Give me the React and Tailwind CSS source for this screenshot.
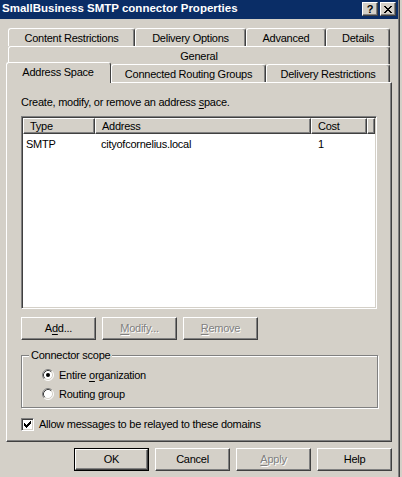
import React from "react";

const RAISED =
  "border border-t-white border-l-white border-r-[#404040] border-b-[#404040] shadow-[inset_-1px_-1px_0_#808080]";
const DIS = "text-[#808080] [text-shadow:1px_1px_0_#ffffff]";

function Px({ rows, color = "#000", w, h }) {
  const rects = [];
  rows.forEach((r, y) => {
    for (let x = 0; x < r.length; x++) if (r[x] === "#") rects.push(<rect key={x + "-" + y} x={x} y={y} width="1" height="1" fill={color} />);
  });
  return (
    <svg width={w} height={h} viewBox={`0 0 ${w} ${h}`} shapeRendering="crispEdges">
      {rects}
    </svg>
  );
}

function CapBtn({ children }) {
  return (
    <div className={`w-[16px] h-[14px] bg-[#d4d0c8] flex items-center justify-center ${RAISED}`}>{children}</div>
  );
}

function Tab({ className, children }) {
  return (
    <div
      className={`shrink-0 flex items-center justify-center pt-[1px] bg-[#d4d0c8] border-t border-l border-r border-t-white border-l-white border-r-[#404040] rounded-t-[3px] shadow-[inset_-1px_0_0_#808080] whitespace-nowrap ${className}`}
    >
      {children}
    </div>
  );
}

function Btn({ children, disabled, def }) {
  const inner = (
    <div className={`w-full h-full flex items-center justify-center bg-[#d4d0c8] ${RAISED} ${disabled ? DIS : ""}`}>
      {children}
    </div>
  );
  if (def) return <div className="w-[75px] h-[23px] border border-black">{inner}</div>;
  return <div className="w-[75px] h-[23px]">{inner}</div>;
}

function Radio({ checked }) {
  return (
    <svg width="12" height="12" viewBox="0 0 12 12" className="shrink-0">
      <circle cx="6" cy="6" r="5" fill="#ffffff" />
      <path d="M2.11 9.89 A5.5 5.5 0 0 1 9.89 2.11" stroke="#808080" strokeWidth="1" fill="none" />
      <path d="M9.89 2.11 A5.5 5.5 0 0 1 2.11 9.89" stroke="#ffffff" strokeWidth="1" fill="none" />
      <path d="M2.82 9.18 A4.5 4.5 0 0 1 9.18 2.82" stroke="#404040" strokeWidth="1" fill="none" />
      <path d="M9.18 2.82 A4.5 4.5 0 0 1 2.82 9.18" stroke="#d4d0c8" strokeWidth="1" fill="none" />
      {checked && <circle cx="6" cy="6" r="2" fill="#000" />}
    </svg>
  );
}

function HeadCell({ className, children }) {
  return (
    <div className={`h-full shrink-0 flex items-center pl-[6px] bg-[#d4d0c8] ${RAISED} ${className}`}>{children}</div>
  );
}

export default function App() {
  return (
    <div className="w-[402px] h-[477px] bg-[#d4d0c8] overflow-hidden flex font-['Liberation_Sans',Arial,sans-serif] text-[11px] leading-[13px] text-black tracking-[-0.25px]">
      <div className="w-[398px] shrink-0 flex flex-col">
        {/* Title bar */}
        <div className="h-[19px] shrink-0 bg-[#0a2d66] flex items-start justify-between pl-[2px] pr-[2px]">
          <div className="pt-[2px] text-white font-bold text-[11.5px] tracking-normal whitespace-nowrap">
            SmallBusiness SMTP connector Properties
          </div>
          <div className="flex gap-[2px] pt-[2px]">
            <CapBtn>
              <span className="font-bold text-[11px] leading-[11px] tracking-normal">?</span>
            </CapBtn>
            <CapBtn>
              <Px
                w={8}
                h={7}
                rows={["##....##", ".##..##.", "..####..", "...##...", "..####..", ".##..##.", "##....##"]}
              />
            </CapBtn>
          </div>
        </div>

        {/* Tabs */}
        <div className="mt-[9px] ml-[8px] w-[382px] flex flex-col">
          <div className="flex h-[18px]">
            <Tab className="w-[127px]">Content Restrictions</Tab>
            <Tab className="w-[111px]">Delivery Options</Tab>
            <Tab className="w-[80px]">Advanced</Tab>
            <Tab className="w-[64px]">Details</Tab>
          </div>
          <div className="flex h-[18px]">
            <Tab className="w-[382px]">General</Tab>
          </div>
          <div className="flex h-[18px]">
            <Tab className="w-[105px] h-[21px] -mt-[2px] -ml-[2px] relative z-10 shadow-none border-r-[#404040]">
              <span className="-mt-[3px] pr-[1px]">Address Space</span>
            </Tab>
            <Tab className="w-[155px] h-[18px]">Connected Routing Groups</Tab>
            <Tab className="w-[124px] h-[18px]">Delivery Restrictions</Tab>
          </div>
        </div>

        {/* Panel */}
        <div className={`ml-[6px] w-[386px] h-[360px] shrink-0 flex flex-col pl-[14px] ${RAISED}`}>
          <div className="mt-[13px] h-[13px] whitespace-nowrap">
            Create, modify, or remove an address <span className="underline underline-offset-[2px]">s</span>pace.
          </div>

          {/* List view */}
          <div className="mt-[7px] w-[356px] h-[193px] shrink-0 bg-white border border-t-[#808080] border-l-[#808080] border-r-white border-b-white shadow-[inset_1px_1px_0_#404040,inset_-1px_-1px_0_#d4d0c8] p-[1px] flex flex-col">
            <div className="h-[16px] flex shrink-0">
              <HeadCell className="w-[72px]">Type</HeadCell>
              <HeadCell className="w-[216px]">Address</HeadCell>
              <HeadCell className="w-[56px]">Cost</HeadCell>
              <HeadCell className="flex-1 shrink"> </HeadCell>
            </div>
            <div className="flex pt-[4px] h-[17px] whitespace-nowrap">
              <div className="w-[72px] pl-[3px]">SMTP</div>
              <div className="w-[216px] pl-[6px]">cityofcornelius.local</div>
              <div className="pl-[7px]">1</div>
            </div>
          </div>

          {/* Buttons */}
          <div className="mt-[8px] flex gap-[6px]">
            <Btn>
              <span>
                A<span className="underline underline-offset-[2px]">d</span>d...
              </span>
            </Btn>
            <Btn disabled>
              <span>
                <span className="underline underline-offset-[2px]">M</span>odify...
              </span>
            </Btn>
            <Btn disabled>
              <span>
                <span className="underline underline-offset-[2px]">R</span>emove
              </span>
            </Btn>
          </div>

          {/* Group box */}
          <div className="mt-[15px] w-[357px] h-[53px] shrink-0 relative border border-[#808080] shadow-[inset_1px_1px_0_#ffffff,1px_1px_0_#ffffff] flex flex-col pl-[20px] pt-[12px] gap-[5px]">
            <span className="absolute left-[7px] -top-[7px] px-[2px] bg-[#d4d0c8] whitespace-nowrap">Connector scope</span>
            <div className="h-[14px] flex items-center gap-[5px] whitespace-nowrap">
              <Radio checked />
              <span>
                Entire <span className="underline underline-offset-[2px]">o</span>rganization
              </span>
            </div>
            <div className="h-[14px] flex items-center gap-[5px] whitespace-nowrap">
              <Radio />
              <span>Routing group</span>
            </div>
          </div>

          {/* Checkbox */}
          <div className="mt-[10px] flex items-center gap-[5px] whitespace-nowrap">
            <div className="w-[13px] h-[13px] shrink-0 bg-white border border-t-[#808080] border-l-[#808080] border-r-white border-b-white shadow-[inset_1px_1px_0_#404040,inset_-1px_-1px_0_#d4d0c8] flex items-center justify-center">
              <Px
                w={7}
                h={7}
                rows={["......#", ".....##", "#...###", "##.###.", "#####..", ".###...", "..#...."]}
              />
            </div>
            <span>Allow messages to be relayed to these domains</span>
          </div>
        </div>

        {/* Bottom buttons */}
        <div className="mt-[6px] flex justify-end gap-[6px] pr-[6px]">
          <Btn def>OK</Btn>
          <Btn>Cancel</Btn>
          <Btn disabled>
            <span>
              <span className="underline underline-offset-[2px]">A</span>pply
            </span>
          </Btn>
          <Btn>Help</Btn>
        </div>
      </div>
      <div className="w-[1px] bg-[#808080] shrink-0" />
      <div className="w-[1px] bg-[#404040] shrink-0" />
    </div>
  );
}
